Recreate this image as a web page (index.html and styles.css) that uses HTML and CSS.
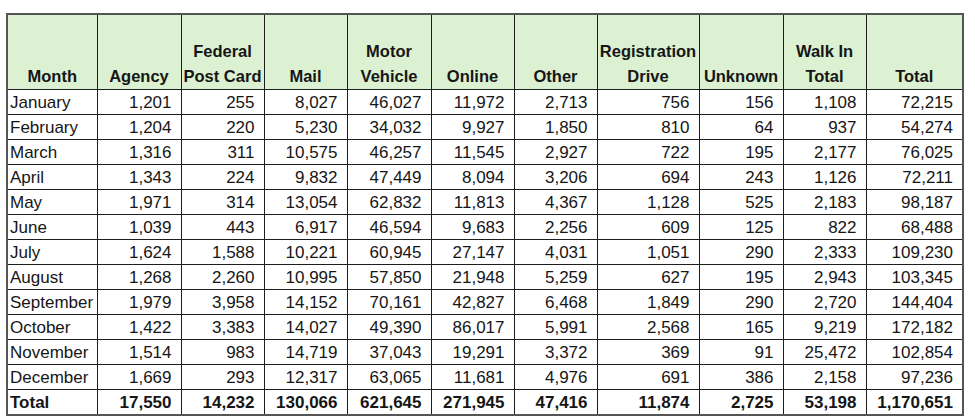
FILE: index.html
```html
<!DOCTYPE html>
<html>
<head>
<meta charset="utf-8">
<link rel="stylesheet" href="styles.css">
</head>
<body>
<table class="grid">
  <colgroup>
    <col class="c-month"><col class="c-84"><col class="c-83"><col class="c-83"><col class="c-84"><col class="c-83"><col class="c-83"><col class="c-reg"><col class="c-84"><col class="c-83"><col class="c-total">
  </colgroup>
  <thead>
    <tr>
      <th>Month</th><th>Agency</th><th>Federal<br>Post Card</th><th>Mail</th><th>Motor<br>Vehicle</th><th>Online</th><th>Other</th><th>Registration<br>Drive</th><th>Unknown</th><th>Walk In<br>Total</th><th>Total</th>
    </tr>
  </thead>
  <tbody>
    <tr><td>January</td><td>1,201</td><td>255</td><td>8,027</td><td>46,027</td><td>11,972</td><td>2,713</td><td>756</td><td>156</td><td>1,108</td><td>72,215</td></tr>
    <tr><td>February</td><td>1,204</td><td>220</td><td>5,230</td><td>34,032</td><td>9,927</td><td>1,850</td><td>810</td><td>64</td><td>937</td><td>54,274</td></tr>
    <tr><td>March</td><td>1,316</td><td>311</td><td>10,575</td><td>46,257</td><td>11,545</td><td>2,927</td><td>722</td><td>195</td><td>2,177</td><td>76,025</td></tr>
    <tr><td>April</td><td>1,343</td><td>224</td><td>9,832</td><td>47,449</td><td>8,094</td><td>3,206</td><td>694</td><td>243</td><td>1,126</td><td>72,211</td></tr>
    <tr><td>May</td><td>1,971</td><td>314</td><td>13,054</td><td>62,832</td><td>11,813</td><td>4,367</td><td>1,128</td><td>525</td><td>2,183</td><td>98,187</td></tr>
    <tr><td>June</td><td>1,039</td><td>443</td><td>6,917</td><td>46,594</td><td>9,683</td><td>2,256</td><td>609</td><td>125</td><td>822</td><td>68,488</td></tr>
    <tr><td>July</td><td>1,624</td><td>1,588</td><td>10,221</td><td>60,945</td><td>27,147</td><td>4,031</td><td>1,051</td><td>290</td><td>2,333</td><td>109,230</td></tr>
    <tr><td>August</td><td>1,268</td><td>2,260</td><td>10,995</td><td>57,850</td><td>21,948</td><td>5,259</td><td>627</td><td>195</td><td>2,943</td><td>103,345</td></tr>
    <tr><td>September</td><td>1,979</td><td>3,958</td><td>14,152</td><td>70,161</td><td>42,827</td><td>6,468</td><td>1,849</td><td>290</td><td>2,720</td><td>144,404</td></tr>
    <tr><td>October</td><td>1,422</td><td>3,383</td><td>14,027</td><td>49,390</td><td>86,017</td><td>5,991</td><td>2,568</td><td>165</td><td>9,219</td><td>172,182</td></tr>
    <tr><td>November</td><td>1,514</td><td>983</td><td>14,719</td><td>37,043</td><td>19,291</td><td>3,372</td><td>369</td><td>91</td><td>25,472</td><td>102,854</td></tr>
    <tr><td>December</td><td>1,669</td><td>293</td><td>12,317</td><td>63,065</td><td>11,681</td><td>4,976</td><td>691</td><td>386</td><td>2,158</td><td>97,236</td></tr>
    <tr class="total"><td>Total</td><td>17,550</td><td>14,232</td><td>130,066</td><td>621,645</td><td>271,945</td><td>47,416</td><td>11,874</td><td>2,725</td><td>53,198</td><td>1,170,651</td></tr>
  </tbody>
</table>
</body>
</html>
```
FILE: styles.css
```css
html, body {
  margin: 0;
  background: #ffffff;
}
body {
  padding: 13px 0 0 6px;
  font-family: "Liberation Sans", Arial, sans-serif;
  color: #161616;
}
.grid {
  border-collapse: collapse;
  table-layout: fixed;
  width: 958px;
  border: 2px solid #555;
}
.c-month { width: 90px; }
.c-84 { width: 84px; }
.c-83 { width: 83px; }
.c-reg { width: 102px; }
.c-total { width: 97px; }

.grid th {
  background: #dbf1d1;
  font-weight: bold;
  font-size: 16.5px;
  line-height: 25px;
  height: 74px;
  padding: 0;
  text-align: center;
  vertical-align: bottom;
  border: 1px solid #1e1e1e;
  white-space: nowrap;
}
.grid td {
  font-size: 17px;
  line-height: 23px;
  height: 24px;
  padding: 0 9px 0 2px;
  text-align: right;
  vertical-align: middle;
  border: 1px solid #1e1e1e;
  white-space: nowrap;
}
.grid td:first-child {
  text-align: left;
  padding-left: 2px;
}
.grid tr.total td {
  font-weight: bold;
}
```
